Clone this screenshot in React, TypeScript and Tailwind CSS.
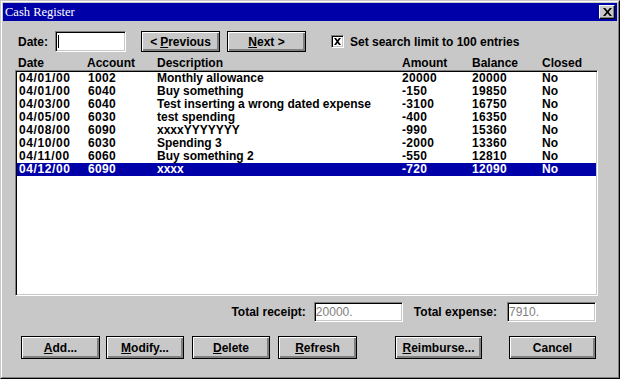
import { ReactNode } from 'react';
import clsx from 'clsx';

const rows = [
  ['04/01/00', '1002', 'Monthly allowance', '20000', '20000', 'No'],
  ['04/01/00', '6040', 'Buy something', '-150', '19850', 'No'],
  ['04/03/00', '6040', 'Test inserting a wrong dated expense', '-3100', '16750', 'No'],
  ['04/05/00', '6030', 'test spending', '-400', '16350', 'No'],
  ['04/08/00', '6090', 'xxxxYYYYYYY', '-990', '15360', 'No'],
  ['04/10/00', '6030', 'Spending 3', '-2000', '13360', 'No'],
  ['04/11/00', '6060', 'Buy something 2', '-550', '12810', 'No'],
  ['04/12/00', '6090', 'xxxx', '-720', '12090', 'No'],
];

const sunken =
  'border border-t-[#808080] border-l-[#808080] border-b-white border-r-white shadow-[inset_1px_1px_0_#000,inset_-1px_-1px_0_#c8c8c8]';

function Btn({ children, className }: { children: ReactNode; className?: string }) {
  return (
    <button
      className={clsx(
        'flex items-center justify-center border border-black bg-[#c8c8c8] pt-[1px] text-[12px] font-bold leading-none text-black shadow-[inset_1px_1px_0_#fff,inset_-2px_-2px_0_#808080]',
        className
      )}
    >
      {children}
    </button>
  );
}

export default function App() {
  return (
    <div className="h-[379px] w-[620px] border border-t-[#c8c8c8] border-l-[#c8c8c8] border-r-black border-b-black bg-[#c8c8c8] font-['Liberation_Sans',Arial,sans-serif] text-black">
      <div className="flex h-full flex-col border border-t-white border-l-white border-r-[#808080] border-b-[#808080] p-[1px]">
        {/* title bar */}
        <div className="flex h-[18px] items-center justify-between bg-[#0000a8] pl-[2px] pr-[2px]">
          <span className="font-['Liberation_Serif','Times_New_Roman',serif] text-[12.5px] leading-none text-white">
            Cash Register
          </span>
          <button className="flex h-[14px] w-[16px] items-center justify-center border border-t-white border-l-white border-r-black border-b-black bg-[#c8c8c8] shadow-[inset_-1px_-1px_0_#808080]">
            <svg viewBox="0 0 9 8" className="h-[8px] w-[9px]">
              <path d="M0 0h2.2l2.3 2.8L6.8 0H9L5.6 4 9 8H6.8L4.5 5.2 2.2 8H0l3.4-4z" fill="#000" />
            </svg>
          </button>
        </div>

        <div className="flex flex-1 flex-col pl-[12px] pr-[19px]">
          {/* search row */}
          <div className="mt-[10px] flex h-[21px] items-center pl-[3px] text-[12px] font-bold">
            <span className="w-[37px]">Date:</span>
            <div className={clsx(sunken, 'relative h-[21px] w-[71px] bg-white')}>
              <span className="absolute left-[2px] top-[3px] h-[13px] w-px bg-black" />
            </div>
            <Btn className="ml-[15px] h-[21px] w-[79px]">
              &lt; <u className="ml-[3px]">P</u>revious
            </Btn>
            <Btn className="ml-[7px] h-[21px] w-[79px]">
              <u>N</u>ext &gt;
            </Btn>
            <div className={clsx(sunken, 'ml-[25px] flex h-[13px] w-[13px] items-center justify-center bg-white')}>
              <svg viewBox="0 0 7 7" className="h-[7px] w-[7px]">
                <path d="M0 0h2l1.5 2L5 0h2L4.5 3.5 7 7H5L3.5 5 2 7H0l2.5-3.5z" fill="#000" />
              </svg>
            </div>
            <span className="ml-[6px]">Set search limit to 100 entries</span>
          </div>

          {/* headers */}
          <div className="mt-[5px] grid h-[13px] grid-cols-[69px_70px_245px_70px_70px_1fr] pl-[3px] text-[12px] font-bold leading-[13px]">
            <span>Date</span>
            <span>Account</span>
            <span>Description</span>
            <span>Amount</span>
            <span>Balance</span>
            <span>Closed</span>
          </div>

          {/* list */}
          <div className={clsx(sunken, 'h-[226px] bg-white p-px')}>
            {rows.map((r, i) => (
              <div
                key={i}
                className={clsx(
                  'grid h-[13px] grid-cols-[69px_69px_245px_70px_70px_1fr] pl-[2px] text-[12px] font-bold leading-[13px]',
                  i === rows.length - 1 ? 'bg-[#0000a8] text-white' : 'text-black'
                )}
              >
                <span className="tracking-[0.6px]">{r[0]}</span>
                <span className="tracking-[0.3px]">{r[1]}</span>
                <span>{r[2]}</span>
                <span className="tracking-[0.3px]">{r[3]}</span>
                <span className="tracking-[0.3px]">{r[4]}</span>
                <span>{r[5]}</span>
              </div>
            ))}
          </div>

          {/* totals */}
          <div className="mt-[6px] flex h-[20px] items-center justify-end pr-[2px] text-[12px] font-bold">
            <span className="mr-[8px]">Total receipt:</span>
            <div className={clsx(sunken, 'flex h-[20px] w-[89px] items-center bg-white pl-[1px] text-[12px] font-normal text-[#808080]')}>
              20000.
            </div>
            <span className="ml-[11px] mr-[10px]">Total expense:</span>
            <div className={clsx(sunken, 'flex h-[20px] w-[89px] items-center bg-white pl-[1px] text-[12px] font-normal text-[#808080]')}>
              7910.
            </div>
          </div>

          {/* buttons */}
          <div className="mt-[14px] flex h-[23px] pl-[6px]">
            <Btn className="h-[23px] w-[79px]">
              <u>A</u>dd...
            </Btn>
            <Btn className="ml-[6px] h-[23px] w-[78px]">
              <u>M</u>odify...
            </Btn>
            <Btn className="ml-[8px] h-[23px] w-[78px]">
              <u>D</u>elete
            </Btn>
            <Btn className="ml-[8px] h-[23px] w-[79px]">
              <u>R</u>efresh
            </Btn>
            <Btn className="ml-[38px] h-[23px] w-[87px]">
              <u>R</u>eimburse...
            </Btn>
            <Btn className="ml-[27px] h-[23px] w-[87px]">Cancel</Btn>
          </div>
        </div>
      </div>
    </div>
  );
}
